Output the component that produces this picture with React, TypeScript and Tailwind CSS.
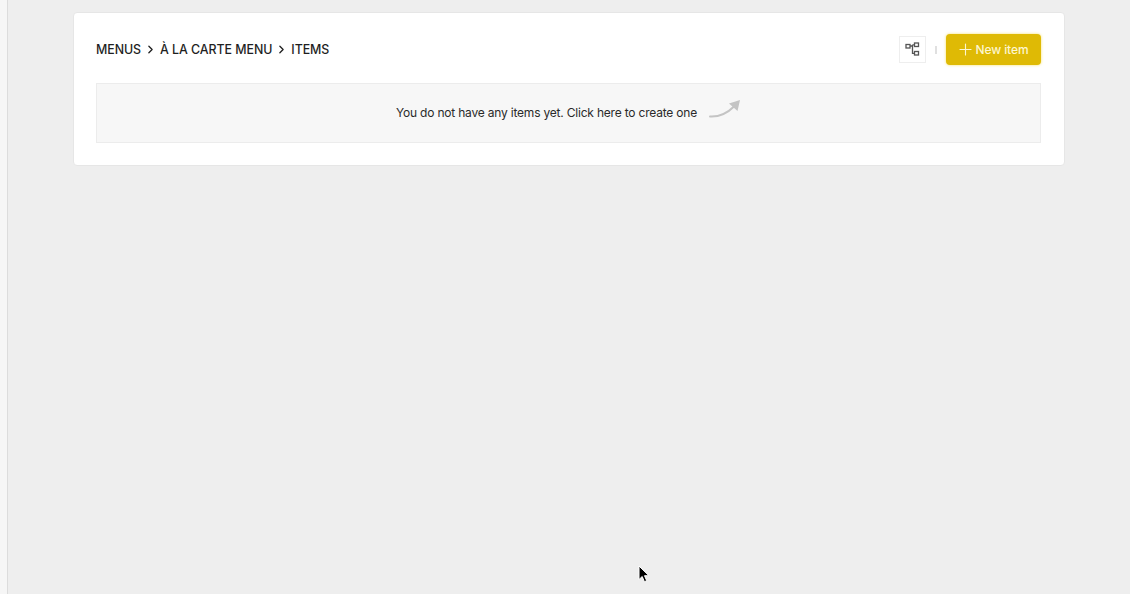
import { ChevronRight, Plus } from 'lucide-react';

function TreeIcon() {
  return (
    <svg width="15" height="15" viewBox="0 0 15 15" fill="none" stroke="#555" strokeWidth="1.3">
      <rect x="1" y="2.5" width="4" height="3.5" />
      <rect x="9.5" y="1" width="4" height="3.5" />
      <rect x="9.5" y="9.5" width="4" height="3.5" />
      <path d="M5 4h2.5M7.5 2.8h2M7.5 2.8v8.5h2" />
    </svg>
  );
}

function SwooshArrow() {
  return (
    <svg width="32" height="20" viewBox="0 0 32 20" fill="none">
      <path d="M1 17.5c9 .5 16-2 24-10" stroke="#c4c4c4" strokeWidth="2" strokeLinecap="round" />
      <path d="M20 4.5L31 1l-2.5 11z" fill="#c4c4c4" />
    </svg>
  );
}

function Cursor() {
  return (
    <svg width="12" height="18" viewBox="0 0 12 18">
      <path d="M1 1v13.5l3.2-3 2.2 5.2 2.3-1-2.2-5h4.4z" fill="#000" stroke="#fff" strokeWidth="1" />
    </svg>
  );
}

export default function App() {
  return (
    <div className="relative flex h-[594px] w-[1130px] overflow-hidden bg-[#eeeeee] font-['Inter',sans-serif]">
      <div className="h-full w-2 shrink-0 border-r border-[#dcdcdc] bg-[#f6f6f6]" />

      <div className="ml-[65px] mt-3 h-[154px] w-[992px] rounded border border-[#e6e6e6] bg-white px-[22px]">
        <div className="flex h-[70px] w-[945px] items-center justify-between pt-1">
          <div className="flex items-center text-[12.4px] font-medium tracking-[-0.05px] text-[#1f1f1f]">
            <span>MENUS</span>
            <ChevronRight className="mx-[3px] text-[#1f1f1f]" size={13} strokeWidth={2.4} />
            <span>À LA CARTE MENU</span>
            <ChevronRight className="mx-[3px] text-[#1f1f1f]" size={13} strokeWidth={2.4} />
            <span>ITEMS</span>
          </div>
          <div className="mb-px flex items-center">
            <button className="mb-px flex h-[27px] w-[27px] items-center justify-center border border-[#eeeeee] bg-white">
              <TreeIcon />
            </button>
            <div className="mx-[9px] h-2 w-[2px] bg-[#e0e0e0]" />
            <button className="flex h-[31px] w-[95px] items-center justify-center rounded-sm bg-[#dfba05] pr-[3px] text-[12px] font-medium tracking-[-0.1px] text-[#fdf6d0] shadow-[0_0_3px_#f5e06a]">
              <Plus size={19} strokeWidth={1.4} />
              <span className="ml-px">New item</span>
            </button>
          </div>
        </div>

        <div className="flex h-[60px] w-[945px] items-center justify-center border border-[#ececec] bg-[#f7f7f7] text-[12px] tracking-[-0.2px] text-[#2a2a2a]">
          <span>You do not have any items yet. Click here to create one</span>
          <span className="mb-2 ml-3">
            <SwooshArrow />
          </span>
        </div>
      </div>

      <div className="absolute left-[638px] top-[565px]">
        <Cursor />
      </div>
    </div>
  );
}
